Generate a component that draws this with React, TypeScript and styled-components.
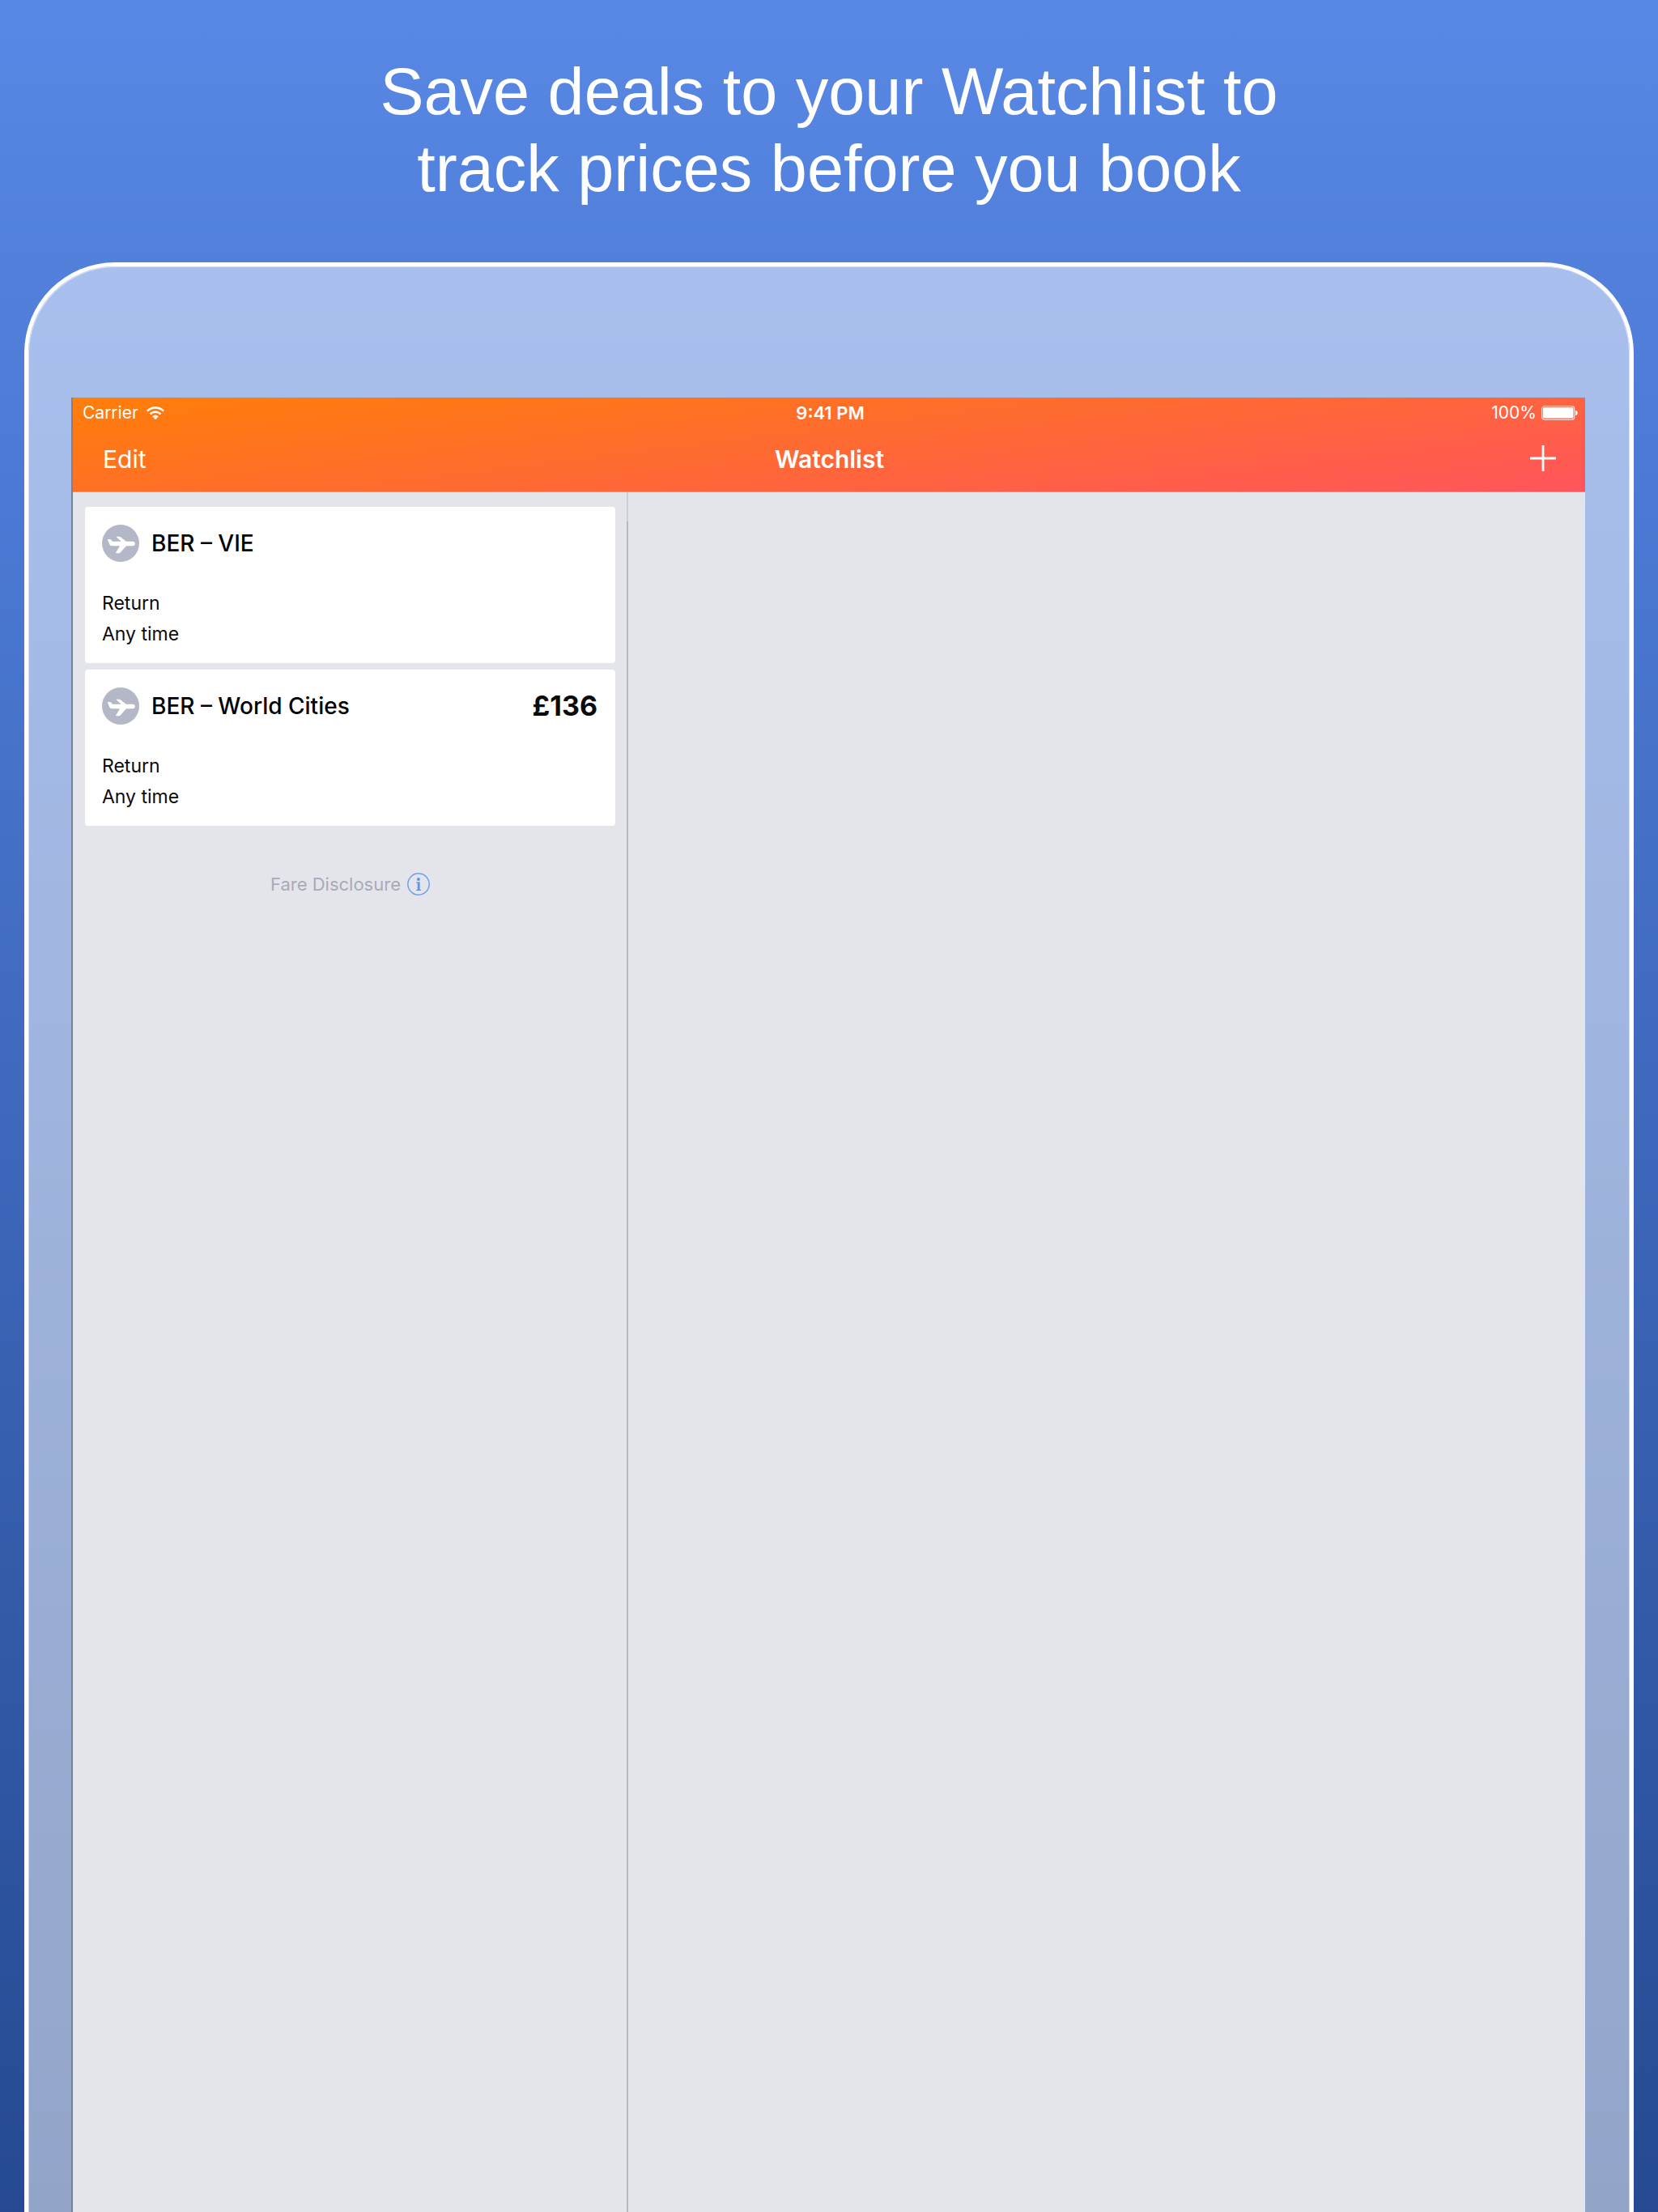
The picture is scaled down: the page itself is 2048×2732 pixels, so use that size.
import React from "react";
import styled, { createGlobalStyle } from "styled-components";

const GlobalStyle = createGlobalStyle`
  *, *::before, *::after { box-sizing: border-box; }
  body { margin: 0; font-family: Inter, "Liberation Sans", sans-serif; }
  svg { display: block; flex: none; }
`;

const Page = styled.main`
  min-height: 100vh;
  display: flex;
  flex-direction: column;
  padding: 66px 30px 0;
  background: linear-gradient(180deg, #5888e5 0%, #4b78d2 24%, #254a92 100%);
`;

const Headline = styled.h1`
  margin: 0 0 68px;
  font: 400 81px/95px "Liberation Sans", Arial, sans-serif;
  color: #fff;
  text-align: center;
`;

const Line = styled.span`
  display: block;
`;

const Device = styled.div`
  flex: 1;
  display: flex;
  padding: 162px 55px 0 53px;
  border: 5px solid #fff;
  border-bottom: 0;
  border-radius: 112px 112px 0 0;
  background: rgba(255, 255, 255, 0.5);
  background-clip: padding-box;
  box-shadow: inset 1px 1px 0 rgba(255, 255, 255, 0.5), inset -1px 0 0 rgba(255, 255, 255, 0.5);
`;

const Screen = styled.section`
  flex: 1;
  display: flex;
  flex-direction: column;
  border-left: 2px solid #75829f;
  background: #e4e5ea;
`;

const Header = styled.header`
  height: 117px;
  color: #fff;
  background: linear-gradient(173deg, #ff7e08 0%, #ff555c 100%);
  border-bottom: 1px solid rgba(255, 255, 255, 0.2);
`;

const Bar = styled.div<{ $nav?: boolean }>`
  display: grid;
  grid-template-columns: 1fr auto 1fr;
  align-items: center;
  height: ${(p) => (p.$nav ? 74 : 38)}px;
  padding: ${(p) => (p.$nav ? "0 36px 0 37px" : "0 9px 0 12px")};
  font-size: ${(p) => (p.$nav ? 30 : 21)}px;
  line-height: ${(p) => (p.$nav ? 36 : 28)}px;
`;

const Group = styled.div<{ $end?: boolean }>`
  display: flex;
  align-items: center;
  gap: ${(p) => (p.$end ? 6 : 10)}px;
  justify-content: ${(p) => (p.$end ? "flex-end" : "flex-start")};
`;

const Clock = styled.span`
  font-size: 22px;
  font-weight: 600;
`;

const Title = styled.h2`
  margin: 0;
  padding-top: 2px;
  font-size: inherit;
  font-weight: 600;
`;

const PlainButton = styled.button`
  border: 0;
  padding: 0;
  background: none;
  font: inherit;
  color: inherit;
  cursor: pointer;
`;

const TextButton = styled(PlainButton)`
  padding-top: 2px;
`;

const Split = styled.div`
  flex: 1;
  display: grid;
  grid-template-columns: minmax(320px, 684px) 2px 1fr;
`;

const Master = styled.div`
  padding: 18px 14px 0 15px;
`;

const Divider = styled.div`
  background: linear-gradient(#cdced3 36px, #b6b8be 36px);
`;

const Cards = styled.ul`
  list-style: none;
  margin: 0;
  padding: 0;
  display: flex;
  flex-direction: column;
  gap: 8px;
`;

const Card = styled.li`
  padding: 22px 22px 17px 21px;
  border-radius: 4px;
  background: #fff;
  color: #0b0b0c;
`;

const CardTop = styled.div`
  display: flex;
  align-items: center;
  gap: 15px;
  margin-bottom: 32px;
`;

const Route = styled.h3`
  flex: 1;
  margin: 0;
  font-size: 28px;
  line-height: 36px;
  font-weight: 500;
  color: #000;
`;

const Price = styled.span`
  font-size: 34px;
  line-height: 36px;
  font-weight: 700;
`;

const Detail = styled.p`
  margin: 0;
  font-size: 23px;
  line-height: 38px;
`;

const Disclosure = styled(PlainButton)`
  display: flex;
  align-items: center;
  gap: 8px;
  margin: 58px auto 0;
  font-size: 22px;
  line-height: 28px;
  color: #a9aab9;
`;

const WifiIcon = () => (
  <svg width="22" height="17" viewBox="0 0 22 17" fill="none" stroke="#fff" strokeWidth="2.4" aria-hidden="true">
    <path d="M1 5.6C6.4.2 15.6.2 21 5.6" />
    <path d="M4.5 9.3c3.6-3.5 9.4-3.5 13 0" />
    <path d="M7.2 12.2c2.2-2 5.4-2 7.6 0L11 16.2z" fill="#fff" stroke="none" />
  </svg>
);

const BatteryIcon = () => (
  <svg width="45" height="18" viewBox="0 0 45 18" aria-hidden="true">
    <rect x=".7" y=".7" width="40" height="16.6" rx="3" fill="none" stroke="#fff" strokeOpacity=".75" strokeWidth="1.2" />
    <rect x="2" y="2" width="37.4" height="13.6" rx="1.6" fill="#fff" />
    <path d="M42 6c3.6.4 3.6 5.6 0 6z" fill="#fff" />
  </svg>
);

const PlusIcon = () => (
  <svg width="32" height="32" viewBox="0 0 32 32" stroke="#fff" strokeWidth="2.8" aria-hidden="true">
    <path d="M16 0v32M0 16h32" />
  </svg>
);

const PlaneIcon = () => (
  <svg width="46" height="46" viewBox="0 0 46 46" aria-hidden="true">
    <circle cx="23" cy="23" r="23" fill="#b4b8c6" />
    <path
      fill="#fff"
      d="M7.8 18h2.2q.6 0 1 .5l1.8 1.9q.4.3 1 .3h10L17.8 15.6q-.7-.9.4-.9h3.2q.8 0 1.5.5l6.3 5.1q.5.4 1.2.4h7.6q2.8.3 2.8 2.7t-2.8 2.8h-7.2q-.9 0-1.5.7l-6.7 7.7q-.6.7-1.5.7h-3.3q-1.200 0-.6-1l4.900-8.100H12.200q-2.300 0-2.900-1.900L7 18.900Q6.900 18 7.800 18z"
    />
  </svg>
);

const InfoIcon = () => (
  <svg width="28" height="28" viewBox="0 0 28 28" fill="#5b95ee" aria-hidden="true">
    <circle cx="14" cy="14" r="13.2" fill="none" stroke="#6fa0f0" strokeWidth="1.5" />
    <circle cx="13.9" cy="7.9" r="2" />
    <path d="M11.200 11.200h4.400v9.500h1.400v1.200h-5.900v-1.200h1.600v-8.200h-1.500z" />
  </svg>
);

type Deal = { route: string; price?: string };

const deals: Deal[] = [{ route: "BER – VIE" }, { route: "BER – World Cities", price: "£136" }];

export default function App() {
  return (
    <>
      <GlobalStyle />
      <Page>
        <Headline>
          <Line>Save deals to your Watchlist to</Line>
          <Line>track prices before you book</Line>
        </Headline>
        <Device>
          <Screen>
            <Header>
              <Bar>
                <Group>
                  <span>Carrier</span>
                  <WifiIcon />
                </Group>
                <Clock>9:41 PM</Clock>
                <Group $end>
                  <span>100%</span>
                  <BatteryIcon />
                </Group>
              </Bar>
              <Bar $nav>
                <Group>
                  <TextButton type="button">Edit</TextButton>
                </Group>
                <Title>Watchlist</Title>
                <Group $end>
                  <PlainButton type="button" aria-label="Add">
                    <PlusIcon />
                  </PlainButton>
                </Group>
              </Bar>
            </Header>
            <Split>
              <Master>
                <Cards>
                  {deals.map((deal) => (
                    <Card key={deal.route}>
                      <CardTop>
                        <PlaneIcon />
                        <Route>{deal.route}</Route>
                        {deal.price && <Price>{deal.price}</Price>}
                      </CardTop>
                      <Detail>Return</Detail>
                      <Detail>Any time</Detail>
                    </Card>
                  ))}
                </Cards>
                <Disclosure type="button">
                  Fare Disclosure
                  <InfoIcon />
                </Disclosure>
              </Master>
              <Divider />
              <div />
            </Split>
          </Screen>
        </Device>
      </Page>
    </>
  );
}
